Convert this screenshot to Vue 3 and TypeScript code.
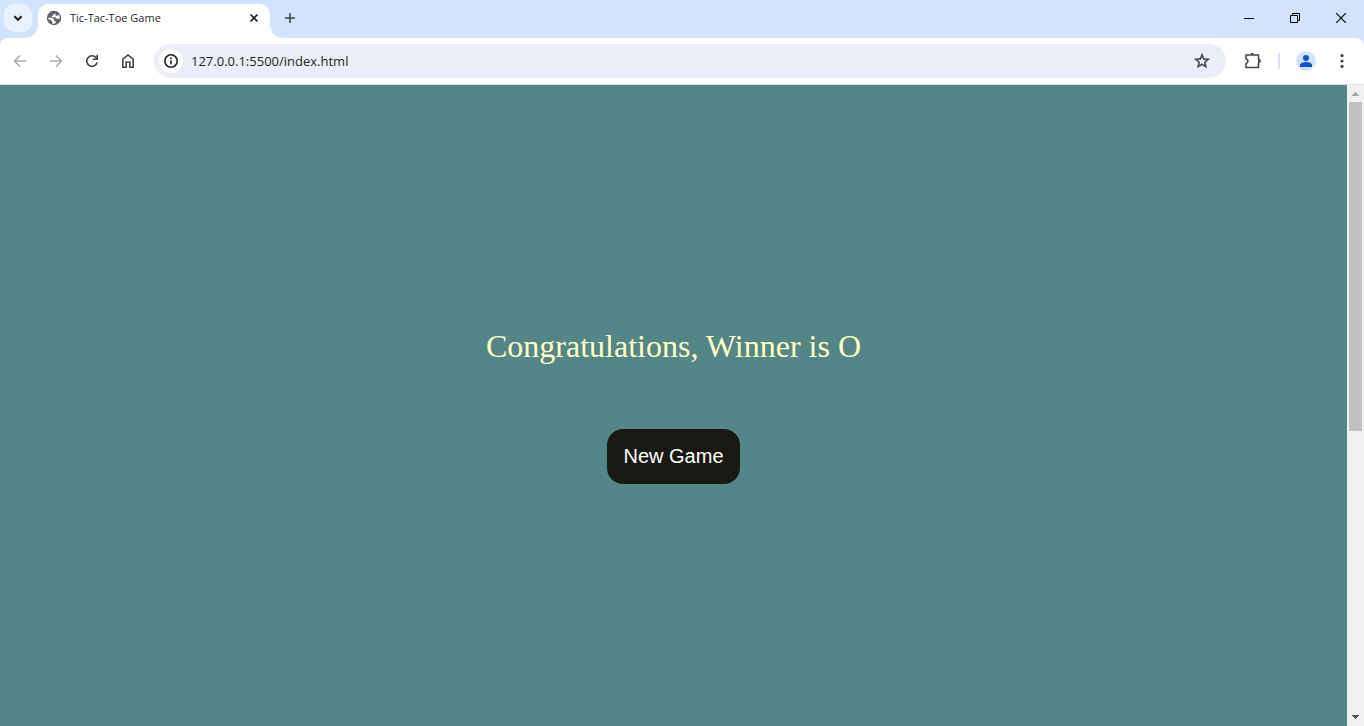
<script setup lang="ts">
import { ref } from 'vue'

const tabTitle = ref('Tic-Tac-Toe Game')
const address = ref('127.0.0.1:5500/index.html')
const winner = ref('O')
</script>

<template>
  <div class="browser">
    <header class="tab-strip">
      <button class="tab-search" aria-label="Search tabs">
        <svg width="12" height="12" viewBox="0 0 12 12"><path d="M2.3 4.2 6 7.8 9.7 4.2" fill="none" stroke="#1f1f1f" stroke-width="2" /></svg>
      </button>
      <div class="tab">
        <svg class="favicon" width="16" height="16" viewBox="0 0 16 16">
          <circle cx="8" cy="8" r="7.2" fill="#5f6368" />
          <path d="M9.500 2.600 8.600 4.200H7.200v1.500H5.800v1.500h3.600l1.400 1.500h2.900A5.800 5.800 0 0 0 12.600 4.500L11 6 9.400 5.600Z" fill="#fff" />
          <path d="M2.200 7.800h4.200L8.200 9.600v1.600h1.600v1.300L8 13.900A5.900 5.900 0 0 1 6.300 13.600v-1.900L4 9.600H2.500Z" fill="#fff" />
        </svg>
        <span class="tab-title">{{ tabTitle }}</span>
        <button class="tab-close" aria-label="Close tab">
          <svg width="10" height="10" viewBox="0 0 10 10"><path d="m1.5 1.5 7 7m0-7-7 7" stroke="#1f1f1f" stroke-width="1.6" /></svg>
        </button>
      </div>
      <button class="new-tab" aria-label="New tab">
        <svg width="12" height="12" viewBox="0 0 12 12"><path d="M6 1v10M1 6h10" stroke="#444746" stroke-width="1.6" /></svg>
      </button>
      <div class="window-controls">
        <button aria-label="Minimize">
          <svg width="10" height="10" viewBox="0 0 10 10"><path d="M0 5.5h10" stroke="#000" /></svg>
        </button>
        <button aria-label="Restore">
          <svg width="10" height="10" viewBox="0 0 10 10" fill="none" stroke="#000"><path d="M.5 2.5h7v7h-7zM2.5 2.5v-2h7v7h-2" /></svg>
        </button>
        <button aria-label="Close">
          <svg width="10" height="10" viewBox="0 0 10 10"><path d="m0 0 10 10M10 0 0 10" stroke="#000" stroke-width="1.1" /></svg>
        </button>
      </div>
    </header>

    <nav class="toolbar" aria-label="Navigation">
      <button class="tool" aria-label="Back">
        <svg width="16" height="16" viewBox="0 0 16 16" fill="none" stroke="#ababab" stroke-width="1.6"><path d="M14 8H3M8 2.5 2.5 8 8 13.5" /></svg>
      </button>
      <button class="tool" aria-label="Forward">
        <svg width="16" height="16" viewBox="0 0 16 16" fill="none" stroke="#ababab" stroke-width="1.6"><path d="M2 8h11M8 2.5 13.5 8 8 13.5" /></svg>
      </button>
      <button class="tool" aria-label="Reload">
        <svg width="16" height="16" viewBox="0 0 16 16" fill="none" stroke="#444746" stroke-width="1.6"><path d="M13.2 9.300A5.300 5.300 0 1 1 12.200 4.700L13.200 6M13.200 1.800v4.500H8.700" /></svg>
      </button>
      <button class="tool" aria-label="Home">
        <svg width="16" height="16" viewBox="0 0 16 16" fill="none" stroke="#444746" stroke-width="1.6"><path d="M2.800 14.200V6.200L8 2l5.200 4.200v8H9.800V9H6.200v5.200Z" /></svg>
      </button>
      <div class="omnibox">
        <button class="site-info" aria-label="View site information">
          <svg width="16" height="16" viewBox="0 0 16 16"><circle cx="8" cy="8" r="6.2" fill="none" stroke="#1f1f1f" stroke-width="1.6" /><path d="M8 7.200v4M8 4.500v1.600" stroke="#1f1f1f" stroke-width="1.6" /></svg>
        </button>
        <input v-model="address" class="address" type="text" aria-label="Address" spellcheck="false">
        <button class="bookmark" aria-label="Bookmark this page">
          <svg width="18" height="18" viewBox="0 0 18 18"><path d="m9 2.800 1.700 4.100 4.500.4-3.400 2.900 1 4.400L9 12.300l-3.800 2.300 1-4.400-3.400-2.900 4.500-.4Z" fill="none" stroke="#444746" stroke-width="1.6" /></svg>
        </button>
      </div>
      <button class="tool extensions" aria-label="Extensions">
        <svg width="20" height="20" viewBox="0 0 20 20"><path d="M3 4h12.500v4.500h.5v3h-.5v5H3v-3.800c2.600-.6 2.600-4.100 0-4.700Z" fill="none" stroke="#444746" stroke-width="1.6" stroke-linejoin="round" /><path d="M7.300 3.600a1.900 1.900 0 0 1 3.800 0ZM16 8.100a1.900 1.900 0 0 1 0 3.800Z" fill="#444746" /></svg>
      </button>
      <span class="divider"></span>
      <button class="tool profile" aria-label="Profile">
        <svg width="20" height="20" viewBox="0 0 20 20"><circle cx="10" cy="10" r="10" fill="#d3e3fd" /><circle cx="10" cy="7" r="3" fill="#0b57d0" /><path d="M4 16v-2c0-2 3-3 6-3s6 1 6 3v2Z" fill="#0b57d0" /></svg>
      </button>
      <button class="tool" aria-label="Menu">
        <svg width="16" height="16" viewBox="0 0 16 16" fill="#444746"><circle cx="8" cy="2.600" r="1.600" /><circle cx="8" cy="8" r="1.600" /><circle cx="8" cy="13.400" r="1.600" /></svg>
      </button>
    </nav>

    <div class="viewport">
      <main class="page">
        <p class="message">Congratulations, Winner is {{ winner }}</p>
        <button class="new-game">New Game</button>
      </main>
      <div class="scrollbar" aria-hidden="true">
        <svg width="17" height="17" viewBox="0 0 17 17" shape-rendering="crispEdges"><path d="M5 11h7L8.500 7Z" fill="#a3a3a3" /></svg>
        <div class="track"><div class="thumb"></div></div>
        <svg width="17" height="17" viewBox="0 0 17 17" shape-rendering="crispEdges"><path d="M5 6h7L8.500 10Z" fill="#505050" /></svg>
      </div>
    </div>
  </div>
</template>

<style>
body {
  margin: 0;
}
</style>

<style scoped>
.browser {
  display: flex;
  flex-direction: column;
  height: 100vh;
  background: #d3e3fd;
  font-family: "Open Sans", "Noto Sans", sans-serif;
}

button {
  display: flex;
  align-items: center;
  justify-content: center;
  flex: none;
  padding: 0;
  border: 0;
  background: transparent;
}

svg {
  display: block;
  flex: none;
}

.tab-strip {
  display: flex;
  align-items: flex-start;
  height: 38px;
  flex: none;
}

.tab-search {
  width: 28px;
  height: 28px;
  margin: 4px 6px 0 4px;
  border-radius: 10px;
  background: #ebf2fe;
}

.tab {
  position: relative;
  display: flex;
  align-items: center;
  box-sizing: border-box;
  width: 232px;
  height: 34px;
  margin-top: 4px;
  padding: 0 8px 6px;
  border-radius: 10px 10px 0 0;
  background: #fff;
}

.tab::before,
.tab::after {
  content: "";
  position: absolute;
  bottom: 0;
  width: 12px;
  height: 12px;
}

.tab::before {
  right: 100%;
  background: radial-gradient(circle at 0 0, transparent 11px, #fff 12px);
}

.tab::after {
  left: 100%;
  background: radial-gradient(circle at 100% 0, transparent 11px, #fff 12px);
}

.tab-title {
  flex: 1;
  margin-left: 8px;
  color: #1f1f1f;
  font-size: 11px;
  line-height: 16px;
  white-space: nowrap;
}

.tab-close {
  width: 16px;
  height: 16px;
}

.new-tab {
  width: 28px;
  height: 28px;
  margin: 4px 0 0 6px;
}

.window-controls {
  display: flex;
  margin-left: auto;
}

.window-controls button {
  width: 46px;
  height: 36px;
}

.toolbar {
  display: flex;
  align-items: center;
  box-sizing: border-box;
  height: 47px;
  flex: none;
  padding: 0 4px 0 2px;
  border-bottom: 1px solid #dfe1e5;
  border-radius: 8px 8px 0 0;
  background: #fff;
}

.tool {
  width: 36px;
  height: 34px;
}

.omnibox {
  display: flex;
  align-items: center;
  flex: 1;
  min-width: 0;
  height: 34px;
  box-sizing: border-box;
  margin-left: 8px;
  padding: 0 12px 0 5px;
  border-radius: 17px;
  background: #ebeef7;
}

.site-info {
  width: 24px;
  height: 24px;
  border-radius: 50%;
  background: #fff;
}

.address {
  flex: 1;
  min-width: 0;
  margin-left: 8px;
  padding: 0;
  border: 0;
  outline: 0;
  background: transparent;
  color: #1f1f1f;
  font: 13px/20px "Open Sans", "Noto Sans", sans-serif;
}

.bookmark {
  width: 24px;
  height: 24px;
}

.extensions {
  margin-left: 9px;
}

.divider {
  width: 2px;
  height: 16px;
  margin: 0 8px 0 7px;
  background: #d3e3fd;
}

.viewport {
  display: flex;
  flex: 1;
  min-height: 0;
}

.page {
  display: flex;
  flex: 1;
  flex-direction: column;
  align-items: center;
  justify-content: center;
  gap: 64px;
  background: #548687;
}

.message {
  margin: 0;
  color: #ffffc7;
  font: 32px/37px "Liberation Serif", serif;
}

.new-game {
  padding: 16px;
  border-radius: 16px;
  background: #191913;
  color: #fff;
  font: 20px/23px "Liberation Sans", sans-serif;
}

.scrollbar {
  display: flex;
  flex-direction: column;
  width: 17px;
  background: #f1f1f1;
}

.track {
  flex: 1;
  padding: 0 2px;
}

.thumb {
  height: 54.2%;
  background: #c1c1c1;
}
</style>
